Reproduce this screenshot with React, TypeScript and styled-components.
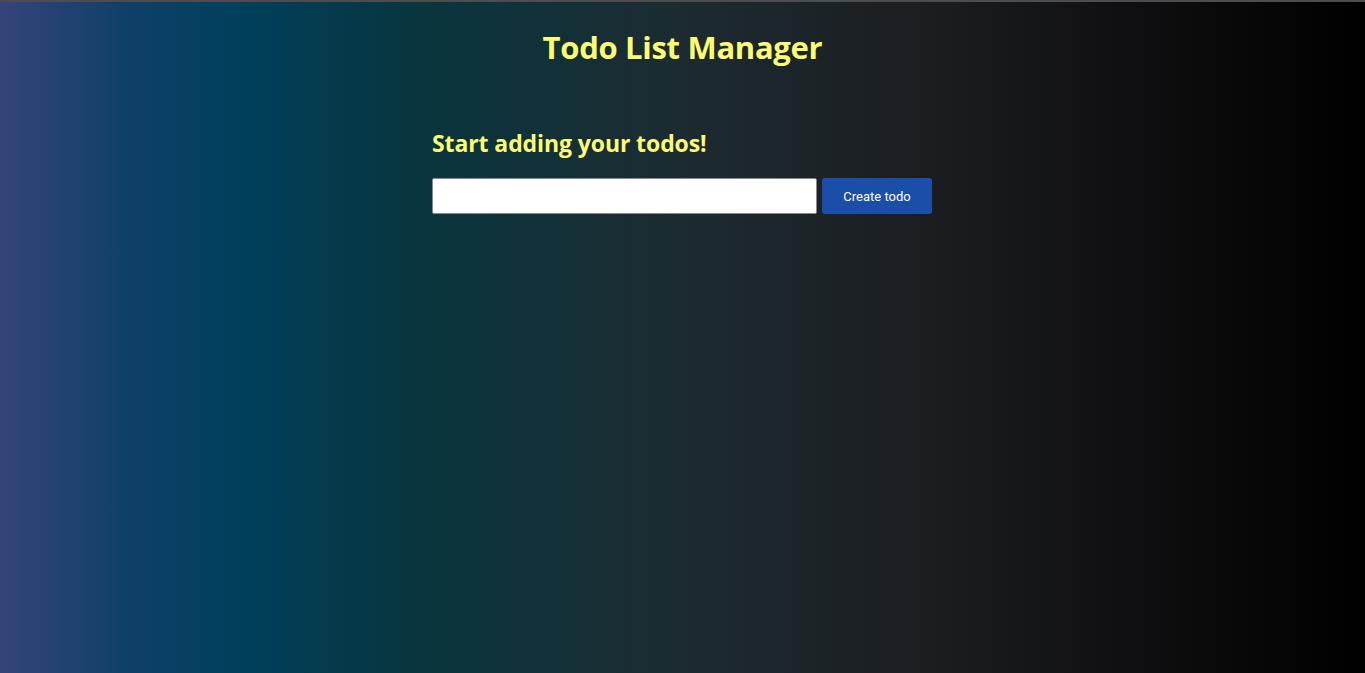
import React, { useState } from "react";
import styled, { createGlobalStyle } from "styled-components";

const GlobalStyle = createGlobalStyle`
  html, body { margin: 0; padding: 0; }
  body { font-family: "Open Sans", "Noto Sans", sans-serif; }
  * { box-sizing: border-box; }
`;

const Page = styled.div`
  min-height: 100vh;
  border-top: 2px solid #4d4d4f;
  background: linear-gradient(
    to right,
    #344479 0%,
    #0f4068 9%,
    #003f5b 18%,
    #08363f 30%,
    #1c2b30 50%,
    #1b1d21 68%,
    #111113 81%,
    #000000 100%
  );
  display: flex;
  flex-direction: column;
  align-items: center;
`;

const Title = styled.h1`
  margin: 25px 0 0;
  font-family: "Open Sans", "Noto Sans", sans-serif;
  font-weight: 700;
  font-size: 31px;
  line-height: 40px;
  letter-spacing: -0.3px;
  color: #fdfb74;
`;

const Main = styled.main`
  width: 500px;
  margin-top: 61px;
  margin-right: 1px;
  display: flex;
  flex-direction: column;
`;

const Subtitle = styled.h2`
  margin: 0;
  font-family: "Open Sans", "Noto Sans", sans-serif;
  font-weight: 700;
  font-size: 23px;
  line-height: 30px;
  letter-spacing: -0.1px;
  color: #fdfb74;
`;

const Form = styled.form`
  margin-top: 20px;
  display: flex;
  gap: 5px;
`;

const Input = styled.input`
  width: 385px;
  height: 36px;
  border: 1px solid #8a8a8a;
  border-radius: 2px;
  background: #ffffff;
  padding: 0 8px;
  font-size: 14px;
  outline: none;
`;

const Button = styled.button`
  width: 110px;
  height: 36px;
  border: none;
  border-radius: 3px;
  background: #1b4ea8;
  color: #ffffff;
  font-family: Roboto, "Liberation Sans", Arial, sans-serif;
  font-size: 13px;
  cursor: pointer;
`;

export default function App() {
  const [value, setValue] = useState("");
  return (
    <>
      <GlobalStyle />
      <Page>
        <Title>Todo List Manager</Title>
        <Main>
          <Subtitle>Start adding your todos!</Subtitle>
          <Form onSubmit={(e) => e.preventDefault()}>
            <Input value={value} onChange={(e) => setValue(e.target.value)} />
            <Button type="submit">Create todo</Button>
          </Form>
        </Main>
      </Page>
    </>
  );
}
